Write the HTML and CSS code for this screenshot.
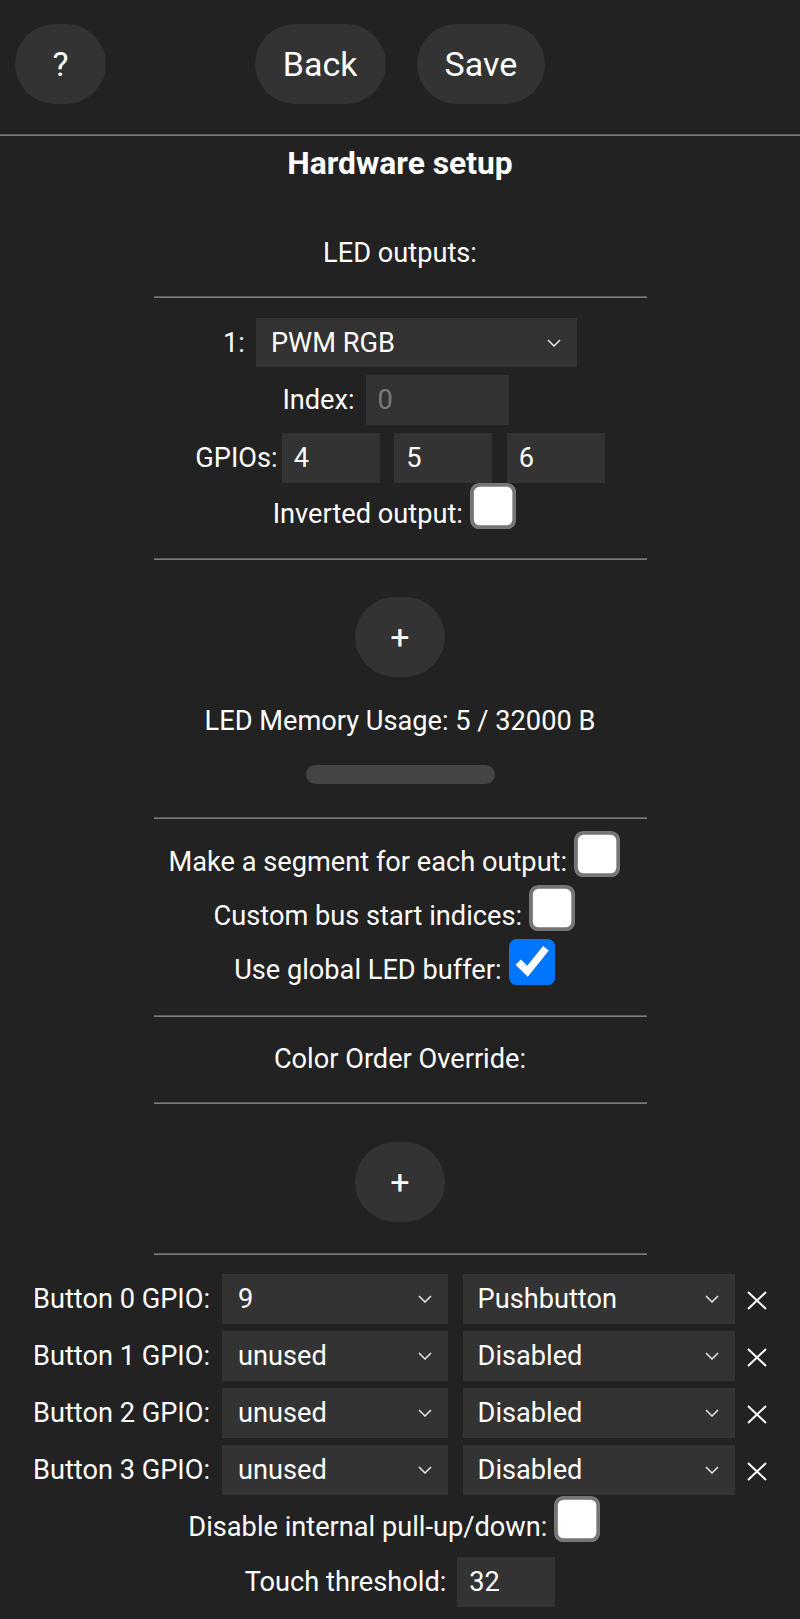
FILE: index.html
```html
<!DOCTYPE html>
<html lang="en">
<head>
<meta charset="utf-8">
<title>Hardware setup</title>
<link rel="stylesheet" href="styles.css">
</head>
<body>
<div class="toprow">
  <div class="tl"><button class="btn btn-help">?</button></div>
  <div class="tc">
    <button class="btn">Back</button>
    <button class="btn">Save</button>
  </div>
  <div class="tr"></div>
</div>
<hr class="hr-full">
<h3 class="title">Hardware setup</h3>

<div class="line hdr-led">LED outputs:</div>
<hr class="hr hr2">

<div class="row selrow">
  <span class="lbl">1:</span>
  <div class="selw sel-type">
    <select class="sel"><option>PWM RGB</option></select>
    <svg class="chev" width="14" height="8" viewBox="0 0 14 8"><path d="M1 1 L7 7 L13 1" fill="none" stroke="#e6e6e6" stroke-width="1.5"/></svg>
  </div>
</div>
<div class="row idxrow">
  <span class="lbl">Index:</span>
  <input class="inp inp-idx" type="text" value="0" readonly>
</div>
<div class="row gpiorow">
  <span class="lbl">GPIOs:</span>
  <input class="inp inp-g" type="text" value="4">
  <input class="inp inp-g" type="text" value="5">
  <input class="inp inp-g" type="text" value="6">
</div>
<div class="row cbrow invrow">
  <span class="lbl cbl">Inverted output:</span>
  <input class="cb" type="checkbox">
</div>
<hr class="hr hr3">

<div class="row plusrow plus1"><button class="btn btn-plus">+</button></div>
<div class="line mem">LED Memory Usage: 5 / 32000 B</div>
<div class="row barrow"><div class="bar"></div></div>
<hr class="hr hr4">

<div class="row cbrow cb1">
  <span class="lbl cbl">Make a segment for each output:</span>
  <input class="cb" type="checkbox">
</div>
<div class="row cbrow cb2">
  <span class="lbl cbl">Custom bus start indices:</span>
  <input class="cb" type="checkbox">
</div>
<div class="row cbrow cb2">
  <span class="lbl cbl">Use global LED buffer:</span>
  <input class="cb" type="checkbox" checked>
</div>
<hr class="hr hr5">

<div class="line colorhdr">Color Order Override:</div>
<hr class="hr hr6">

<div class="row plusrow plus2"><button class="btn btn-plus">+</button></div>
<hr class="hr hr7">

<div class="btnrows">
  <div class="row brow">
    <span class="lbl">Button 0 GPIO:</span>
    <div class="selw sel-g">
      <select class="sel"><option>9</option></select>
      <svg class="chev" width="14" height="8" viewBox="0 0 14 8"><path d="M1 1 L7 7 L13 1" fill="none" stroke="#e6e6e6" stroke-width="1.5"/></svg>
    </div>
    <div class="selw sel-m">
      <select class="sel"><option>Pushbutton</option></select>
      <svg class="chev" width="14" height="8" viewBox="0 0 14 8"><path d="M1 1 L7 7 L13 1" fill="none" stroke="#e6e6e6" stroke-width="1.5"/></svg>
    </div>
    <svg class="xic" width="20" height="19" viewBox="0 0 20 19"><path d="M1 1 L19 18 M19 1 L1 18" fill="none" stroke="#fff" stroke-width="2"/></svg>
  </div>
  <div class="row brow">
    <span class="lbl">Button 1 GPIO:</span>
    <div class="selw sel-g">
      <select class="sel"><option>unused</option></select>
      <svg class="chev" width="14" height="8" viewBox="0 0 14 8"><path d="M1 1 L7 7 L13 1" fill="none" stroke="#e6e6e6" stroke-width="1.5"/></svg>
    </div>
    <div class="selw sel-m">
      <select class="sel"><option>Disabled</option></select>
      <svg class="chev" width="14" height="8" viewBox="0 0 14 8"><path d="M1 1 L7 7 L13 1" fill="none" stroke="#e6e6e6" stroke-width="1.5"/></svg>
    </div>
    <svg class="xic" width="20" height="19" viewBox="0 0 20 19"><path d="M1 1 L19 18 M19 1 L1 18" fill="none" stroke="#fff" stroke-width="2"/></svg>
  </div>
  <div class="row brow">
    <span class="lbl">Button 2 GPIO:</span>
    <div class="selw sel-g">
      <select class="sel"><option>unused</option></select>
      <svg class="chev" width="14" height="8" viewBox="0 0 14 8"><path d="M1 1 L7 7 L13 1" fill="none" stroke="#e6e6e6" stroke-width="1.5"/></svg>
    </div>
    <div class="selw sel-m">
      <select class="sel"><option>Disabled</option></select>
      <svg class="chev" width="14" height="8" viewBox="0 0 14 8"><path d="M1 1 L7 7 L13 1" fill="none" stroke="#e6e6e6" stroke-width="1.5"/></svg>
    </div>
    <svg class="xic" width="20" height="19" viewBox="0 0 20 19"><path d="M1 1 L19 18 M19 1 L1 18" fill="none" stroke="#fff" stroke-width="2"/></svg>
  </div>
  <div class="row brow">
    <span class="lbl">Button 3 GPIO:</span>
    <div class="selw sel-g">
      <select class="sel"><option>unused</option></select>
      <svg class="chev" width="14" height="8" viewBox="0 0 14 8"><path d="M1 1 L7 7 L13 1" fill="none" stroke="#e6e6e6" stroke-width="1.5"/></svg>
    </div>
    <div class="selw sel-m">
      <select class="sel"><option>Disabled</option></select>
      <svg class="chev" width="14" height="8" viewBox="0 0 14 8"><path d="M1 1 L7 7 L13 1" fill="none" stroke="#e6e6e6" stroke-width="1.5"/></svg>
    </div>
    <svg class="xic" width="20" height="19" viewBox="0 0 20 19"><path d="M1 1 L19 18 M19 1 L1 18" fill="none" stroke="#fff" stroke-width="2"/></svg>
  </div>
</div>

<div class="row cbrow pullrow">
  <span class="lbl cbl">Disable internal pull-up/down:</span>
  <input class="cb" type="checkbox">
</div>
<div class="row touchrow">
  <span class="lbl">Touch threshold:</span>
  <input class="inp inp-g" type="text" value="32">
</div>
</body>
</html>
```

FILE: styles.css
```css
html, body {
  margin: 0;
  padding: 0;
}
body {
  background: #222;
  color: #fff;
  font-family: Roboto, "Liberation Sans", sans-serif;
  font-size: 27.2px;
  height: 1619px;
  overflow: hidden;
}

/* top row */
.toprow {
  display: grid;
  grid-template-columns: 1fr auto 1fr;
  align-items: start;
  height: 134px;
  padding-top: 24px;
  box-sizing: border-box;
}
.tl {
  padding-left: 15px;
}
.tc {
  display: flex;
  gap: 31px;
}
.btn {
  background: #333;
  color: #fff;
  border: 0;
  border-radius: 40px;
  height: 80px;
  padding: 0 28px;
  font-family: Roboto, "Liberation Sans", sans-serif;
  font-size: 34px;
  display: flex;
  align-items: center;
  justify-content: center;
  margin: 0;
}
.btn-help {
  width: 91px;
  padding: 0;
}
.btn-plus {
  width: 90px;
  padding: 0;
}

/* rules */
hr {
  border: 0;
  height: 0;
  border-top: 1px solid #5c5c5c;
  border-bottom: 1px solid #7c7c7c;
  margin: 0;
}
.hr-full {
  width: 100%;
}
.hr {
  width: 493px;
  margin-left: auto;
  margin-right: auto;
}
.hr2 { margin-top: 17px; }
.hr3 { margin-top: 28px; }
.hr4 { margin-top: 33px; }
.hr5 { margin-top: 29px; }
.hr6 { margin-top: 23px; }
.hr7 { margin-top: 31px; }

.title {
  margin: 0;
  height: 54px;
  display: flex;
  align-items: center;
  justify-content: center;
  font-size: 31.8px;
  font-weight: 700;
}

.line {
  display: flex;
  align-items: center;
  justify-content: center;
}
.hdr-led {
  margin-top: 36px;
  height: 53px;
}
.mem {
  margin-top: 23px;
  height: 41px;
}
.colorhdr {
  margin-top: 21px;
  height: 41px;
}

/* rows */
.row {
  display: flex;
  align-items: center;
  justify-content: center;
}
.lbl {
  white-space: nowrap;
}
.cbl {
  padding-top: 11px;
}
.selrow {
  margin-top: 20px;
  height: 49px;
  gap: 11px;
}
.idxrow {
  margin-top: 8px;
  height: 50px;
  gap: 11px;
}
.gpiorow {
  margin-top: 8px;
  height: 50px;
  gap: 14.5px;
}
.gpiorow .lbl {
  margin-right: -10.5px;
}
.invrow {
  margin-top: 3px;
}
.cbrow {
  height: 44px;
  gap: 7px;
}
.cb1 { margin-top: 15px; }
.cb2 { margin-top: 10px; }
.pullrow { margin-top: 4px; }

.plusrow {
  height: 80px;
}
.plus1 { margin-top: 37px; }
.plus2 { margin-top: 38px; }

.barrow {
  margin-top: 24px;
  height: 19px;
}
.bar {
  width: 189px;
  height: 19px;
  border-radius: 10px;
  background: #444;
}

/* controls */
.selw {
  position: relative;
  height: 100%;
}
.sel {
  appearance: none;
  -webkit-appearance: none;
  background: #333;
  color: #fff;
  border: 0;
  border-radius: 0;
  margin: 0;
  height: 100%;
  width: 100%;
  padding: 0 40px 0 15px;
  font-family: Roboto, "Liberation Sans", sans-serif;
  font-size: 27.2px;
  box-sizing: border-box;
}
.chev {
  position: absolute;
  right: 16px;
  top: 50%;
  margin-top: -4px;
  pointer-events: none;
}
.sel-type { width: 321px; }
.sel-g { width: 226px; }
.sel-m { width: 272px; }
.sel-g .sel { padding-left: 16px; }

.inp {
  background: #333;
  color: #fff;
  border: 0;
  margin: 0;
  height: 100%;
  padding: 0 0 0 12px;
  box-sizing: border-box;
  font-family: Roboto, "Liberation Sans", sans-serif;
  font-size: 27.2px;
  outline: none;
}
.inp-idx {
  width: 143px;
  color: #7a7a7a;
  margin-right: 9px;
}
.inp-g {
  width: 98px;
}

.cb {
  width: 13px;
  height: 13px;
  zoom: 3.85;
  margin: 0 1.9px 0 0;
  flex: none;
}

/* buttons rows */
.btnrows {
  margin-top: 19px;
  display: flex;
  flex-direction: column;
  gap: 7px;
}
.brow {
  height: 50px;
  gap: 12px;
}
.brow .sel-m {
  margin-left: 2.5px;
}
.xic {
  margin-top: 3px;
  margin-left: 0.5px;
}
.touchrow {
  margin-top: 14px;
  height: 50px;
  gap: 11px;
}
```
